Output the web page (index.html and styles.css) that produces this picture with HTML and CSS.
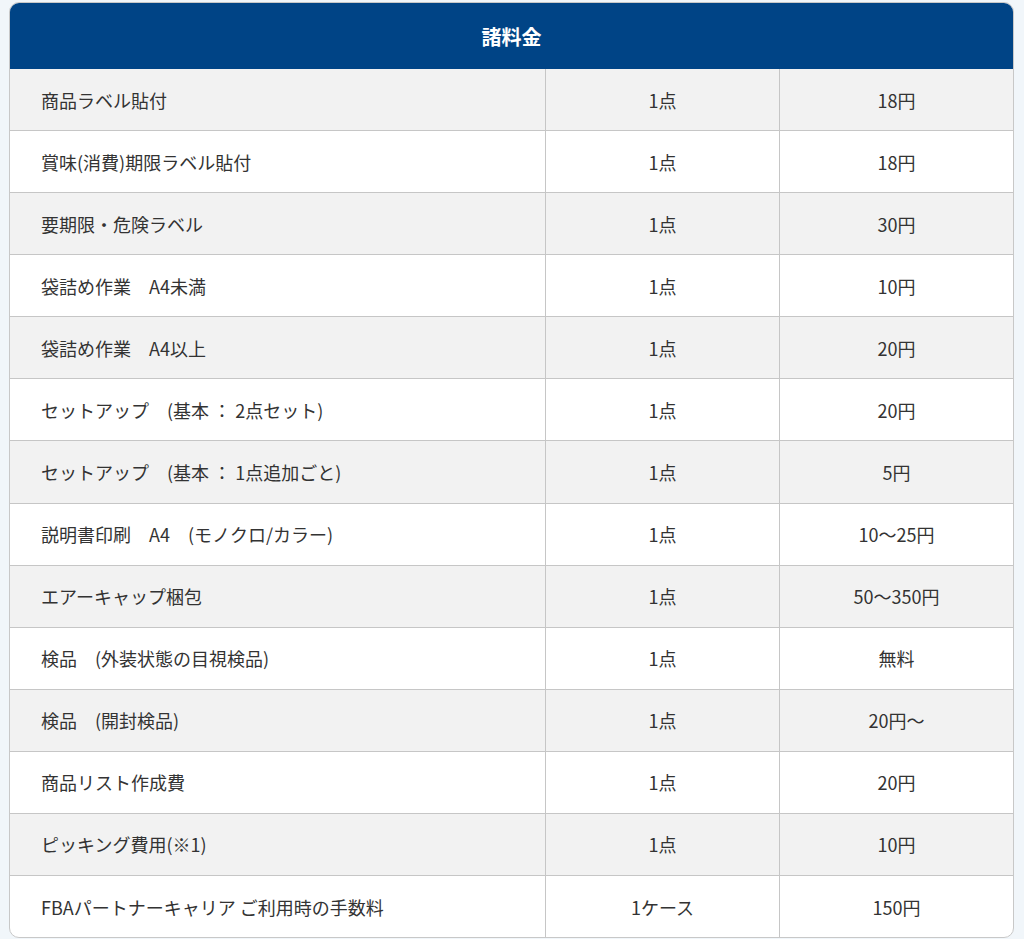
FILE: index.html
```html
<!DOCTYPE html>
<html lang="ja">
<head>
<meta charset="utf-8">
<title>諸料金</title>
<link rel="stylesheet" href="styles.css">
</head>
<body>
<div class="wrap">
<table class="fees">
<colgroup>
<col class="c-name">
<col class="c-unit">
<col class="c-price">
</colgroup>
<thead>
<tr><th colspan="3">諸料金</th></tr>
</thead>
<tbody>
<tr><td>商品ラベル貼付</td><td>1点</td><td>18円</td></tr>
<tr><td>賞味(消費)期限ラベル貼付</td><td>1点</td><td>18円</td></tr>
<tr><td>要期限・危険ラベル</td><td>1点</td><td>30円</td></tr>
<tr><td>袋詰め作業　A4未満</td><td>1点</td><td>10円</td></tr>
<tr><td>袋詰め作業　A4以上</td><td>1点</td><td>20円</td></tr>
<tr><td>セットアップ　(基本 ： 2点セット)</td><td>1点</td><td>20円</td></tr>
<tr><td>セットアップ　(基本 ： 1点追加ごと)</td><td>1点</td><td>5円</td></tr>
<tr><td>説明書印刷　A4　(モノクロ/カラー)</td><td>1点</td><td>10～25円</td></tr>
<tr><td>エアーキャップ梱包</td><td>1点</td><td>50～350円</td></tr>
<tr><td>検品　(外装状態の目視検品)</td><td>1点</td><td>無料</td></tr>
<tr><td>検品　(開封検品)</td><td>1点</td><td>20円～</td></tr>
<tr><td>商品リスト作成費</td><td>1点</td><td>20円</td></tr>
<tr><td>ピッキング費用(※1)</td><td>1点</td><td>10円</td></tr>
<tr><td>FBAパートナーキャリア ご利用時の手数料</td><td>1ケース</td><td>150円</td></tr>
</tbody>
</table>
</div>
</body>
</html>
```
FILE: styles.css
```css
html, body {
  margin: 0;
  padding: 0;
  background: #f1f6fa;
}
body {
  font-family: "Noto Sans CJK JP", "Noto Sans", sans-serif;
  color: #333;
}
.wrap {
  padding: 2px 10px 0 9px;
}
.fees {
  width: 1005px;
  border-collapse: separate;
  border-spacing: 0;
  border: 1px solid #c8c8c8;
  border-radius: 10px;
  overflow: hidden;
  background: #fff;
  table-layout: fixed;
}
.c-name { width: 535px; }
.c-unit { width: 234px; }
.c-price { width: 234px; }
.fees th {
  background: #004486;
  color: #fff;
  font-size: 20px;
  font-weight: bold;
  height: 66px;
  padding: 0;
  text-align: center;
}
.fees td {
  height: 61.08px;
  padding: 0;
  font-size: 18px;
  text-align: center;
  border-bottom: 1px solid #c6c6c6;
  border-left: 1px solid #c6c6c6;
  white-space: nowrap;
}
.fees td:first-child {
  border-left: none;
  text-align: left;
  padding-left: 31px;
}
.fees tbody tr:nth-child(odd) td {
  background: #f2f2f2;
}
.fees tbody tr:last-child td {
  border-bottom: none;
}
```
